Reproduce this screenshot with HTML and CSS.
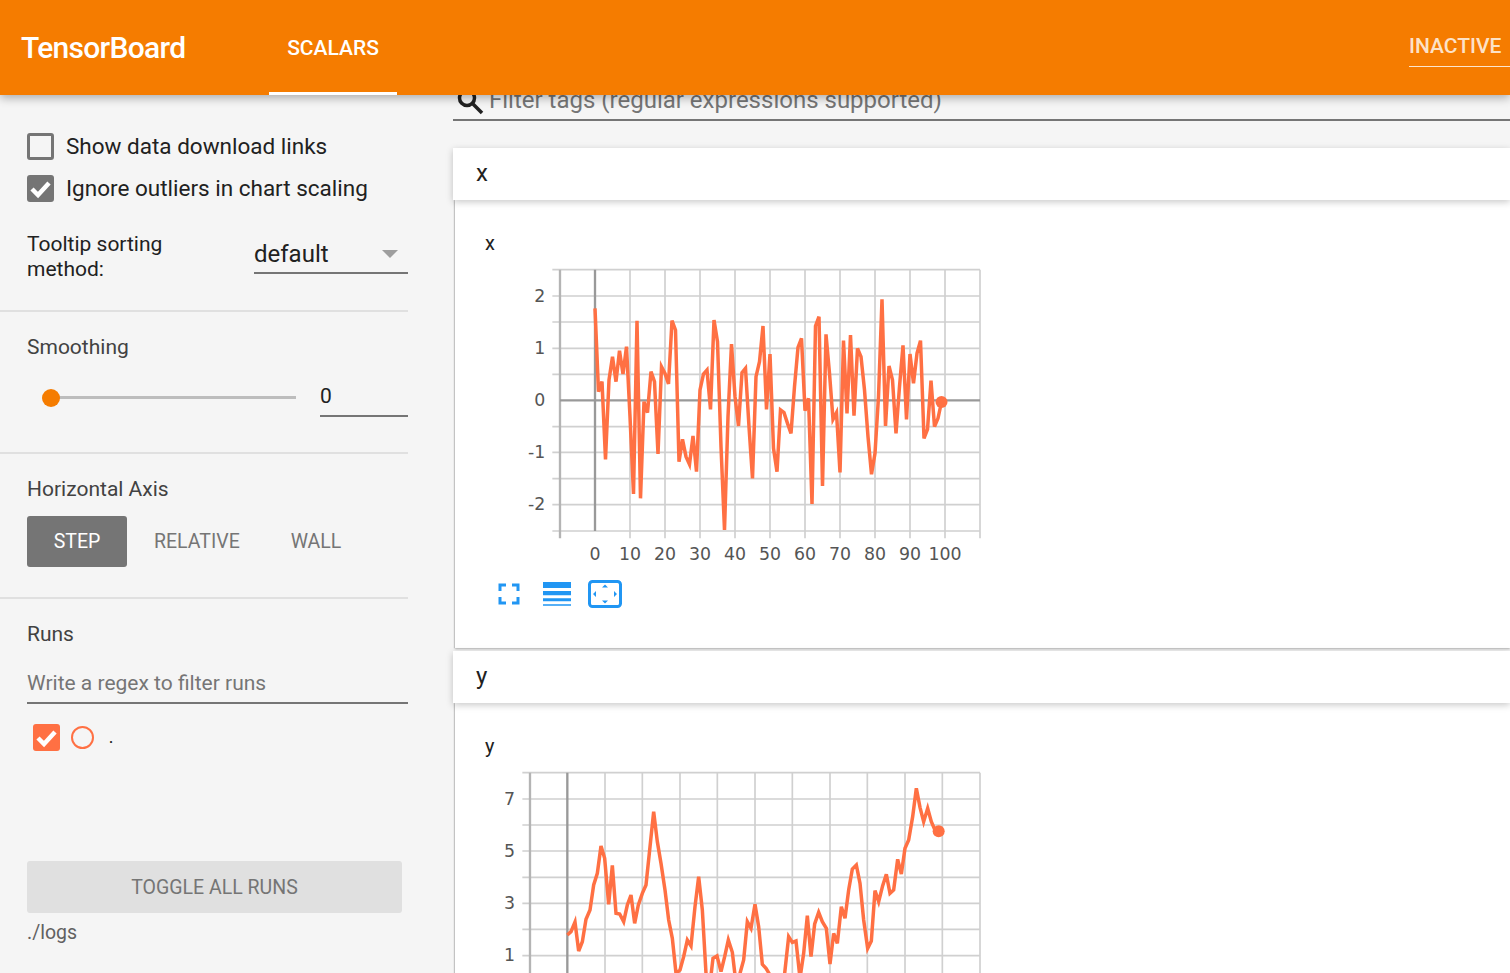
FILE: index.html
```html
<!DOCTYPE html>
<html lang="en">
<head>
<meta charset="utf-8">
<title>TensorBoard</title>
<link rel="stylesheet" href="styles.css">
</head>
<body>
<header class="topbar">
  <div class="brand">TensorBoard</div>
  <div class="tab">SCALARS</div>
  <div class="inactive">INACTIVE</div>
</header>
<div class="layout">
  <aside class="sidebar">
    <section class="sec sec-options">
      <label class="check-row"><span class="box"></span><span class="check-text">Show data download links</span></label>
      <label class="check-row"><span class="box box-on"><svg viewBox="0 0 27 27" class="tick"><path d="M5 14l6 6L22 8"/></svg></span><span class="check-text">Ignore outliers in chart scaling</span></label>
      <div class="tooltip-row">
        <div class="tooltip-label">Tooltip sorting method:</div>
        <div class="select"><span>default</span><i class="arrow"></i></div>
      </div>
    </section>
    <section class="sec sec-smooth">
      <div class="sec-title">Smoothing</div>
      <div class="slider-row">
        <div class="track"><i class="thumb"></i></div>
        <div class="num">0</div>
      </div>
    </section>
    <section class="sec sec-axis">
      <div class="sec-title">Horizontal Axis</div>
      <div class="axis-btns">
        <div class="axbtn axbtn-on">STEP</div>
        <div class="axbtn axbtn-rel">RELATIVE</div>
        <div class="axbtn axbtn-wall">WALL</div>
      </div>
    </section>
    <section class="sec-runs">
      <div class="sec-title">Runs</div>
      <div class="regex">Write a regex to filter runs</div>
      <div class="run-row">
        <span class="run-box"><svg viewBox="0 0 27 27" class="tick"><path d="M5 14l6 6L22 8"/></svg></span>
        <span class="run-dot"></span>
        <span class="run-name">.</span>
      </div>
      <div class="toggle">TOGGLE ALL RUNS</div>
      <div class="logdir">./logs</div>
    </section>
  </aside>
  <main class="main">
    <div class="filter">
      <svg class="search" viewBox="0 0 28 28"><circle cx="11" cy="9" r="7.5"/><path d="M16.5 14.5L26 24"/></svg>
      <span>Filter tags (regular expressions supported)</span>
    </div>
    <section class="cat">
      <div class="cat-head">x</div>
      <div class="cat-body body-x">
        <div class="chart-title">x</div>
        <svg class="plot" viewBox="135 96 1425 1050" width="475" height="350">
          <path class="grid" d="M247 119H1530M247 198H1530M247 276H1530M247 355H1530M247 433H1530M247 590H1530M247 667H1530M247 746H1530M247 824H1530M247 903H1530M480 119V925M585 119V925M690 119V925M795 119V925M900 119V925M1005 119V925M1110 119V925M1215 119V925M1320 119V925M1425 119V925M1530 119V925"/>
          <path class="axis-l" d="M270 119V925"/>
          <path class="axis-z" d="M270 511H1530M375 119V903"/>
          <polyline class="line" points="375,235 385.5,485 396,455 406.5,688 417,450 427.5,380 438,455 448.5,362 459,432 469.5,350 480,560 490.5,792 501,272 511.5,805 522,515 532.5,548 543,425 553.5,455 564,672 574.5,410 585,430 595.5,462 606,272 616.5,300 627,695 637.5,628 648,680 658.5,703 669,618 679.5,725 690,480 700.5,432 711,420 721.5,538 732,270 742.5,335 753,650 763.5,900 774,560 784.5,342 795,500 805.5,588 816,428 826.5,415 837,590 847.5,745 858,440 868.5,395 879,288 889.5,538 900,372 910.5,655 921,725 931.5,540 942,548 952.5,580 963,610 973.5,470 984,352 994.5,325 1005,542 1015.5,505 1026,822 1036.5,288 1047,260 1057.5,768 1068,313 1078.5,430 1089,568 1099.5,548 1110,727 1120.5,332 1131,550 1141.5,315 1152,557 1162.5,355 1173,380 1183.5,480 1194,620 1204.5,733 1215,670 1225.5,500 1236,208 1246.5,588 1257,408 1267.5,450 1278,610 1288.5,470 1299,346 1309.5,568 1320,372 1330.5,460 1341,370 1351.5,332 1362,625 1372.5,598 1383,452 1393.5,590 1404,565 1414.5,516"/>
          <circle class="dot" cx="1414.5" cy="516" r="18"/>
          <g class="ylab">
            <text x="226" y="216">2</text><text x="226" y="373">1</text><text x="226" y="529">0</text><text x="226" y="685">-1</text><text x="226" y="840">-2</text>
          </g>
          <g class="xlab">
            <text x="375" y="990">0</text><text x="480" y="990">10</text><text x="585" y="990">20</text><text x="690" y="990">30</text><text x="795" y="990">40</text><text x="900" y="990">50</text><text x="1005" y="990">60</text><text x="1110" y="990">70</text><text x="1215" y="990">80</text><text x="1320" y="990">90</text><text x="1425" y="990">100</text>
          </g>
        </svg>
        <div class="tools">
          <svg class="tool-full" viewBox="0 0 24 24" width="24" height="24"><path d="M3 9V3h6M15 3h6v6M21 15v6h-6M9 21H3v-6"/></svg>
          <svg class="tool-lines" viewBox="0 0 28 24" width="28" height="24"><path d="M0 0h28v6H0zM0 9h28v4.300H0zM0 16.300h28v3H0zM0 22.300h28v1.400H0z"/></svg>
          <svg class="tool-fit" viewBox="0 0 34 28" width="34" height="28"><rect x="1.500" y="1.500" width="31" height="25" rx="3"/><path d="M17 4.500l3 3h-6zM17 23.500l3-3h-6zM5 14l3-3v6zM29 14l-3-3v6z"/></svg>
        </div>
      </div>
    </section>
    <section class="cat cat-y">
      <div class="cat-head">y</div>
      <div class="cat-body body-y">
        <div class="chart-title">y</div>
        <svg class="plot" viewBox="60 135 1500 1050" width="500" height="350">
          <path class="grid" d="M127 158H1500M127 237H1500M127 315H1500M127 393H1500M127 472H1500M127 550H1500M127 628H1500M127 707H1500M375 158V1000M487 158V1000M600 158V1000M712 158V1000M825 158V1000M937 158V1000M1050 158V1000M1162 158V1000M1275 158V1000M1387 158V1000M1500 158V1000"/>
          <path class="axis-l" d="M150 158V1000"/>
          <path class="axis-z" d="M262 158V1000"/>
          <polyline class="line" points="262,645 273,635 285,606 296,693 307,665 318,598 330,570 341,495 352,460 363,378 374,415 386,553 397,436 408,580 419,582 431,605 442,555 453,525 464,610 475,555 487,520 498,495 509,390 521,275 532,365 543,430 555,510 566,600 577,655 588,760 600,750 611,710 622,660 633,678 645,560 656,470 667,570 678,760 689,800 699,715 711,708 723,755 734,710 745,660 757,697 768,790 780,760 791,720 802,605 813,625 825,553 836,620 847,733 858,745 870,765 881,790 892,790 903,790 914,760 926,650 937,667 948,663 960,775 971,700 982,587 993,710 1004,612 1016,577 1027,605 1039,625 1050,732 1061,640 1072,670 1084,560 1095,595 1106,510 1117,447 1129,435 1140,490 1151,600 1163,685 1174,663 1185,512 1196,545 1208,497 1219,463 1230,520 1241,510 1253,418 1264,462 1275,385 1286,360 1298,290 1309,205 1320,262 1331,305 1343,265 1354,305 1365,330 1376,334"/>
          <circle class="dot" cx="1376" cy="334" r="18"/>
          <g class="ylab">
            <text x="105" y="255">7</text><text x="105" y="411">5</text><text x="105" y="568">3</text><text x="105" y="724">1</text>
          </g>
        </svg>
      </div>
    </section>
  </main>
</div>
</body>
</html>
```
FILE: styles.css
```css
* { box-sizing: border-box; }
html, body { height: 100%; }
body {
  margin: 0;
  height: 973px;
  overflow: hidden;
  background: #f5f5f5;
  font-family: Roboto, "Liberation Sans", sans-serif;
  color: #212121;
}
.topbar {
  position: relative;
  z-index: 5;
  height: 95px;
  background: #f57c00;
  color: #fff;
  display: flex;
  align-items: center;
  padding-left: 21px;
  box-shadow: 0 3px 9px rgba(0, 0, 0, .3);
}
.brand { width: 248px; font-size: 30px; font-weight: 500; letter-spacing: -.7px; }
.tab {
  width: 128px;
  height: 95px;
  line-height: 97px;
  text-align: center;
  font-size: 21px;
  font-weight: 500;
  border-bottom: 3px solid #fff;
}
.inactive {
  margin-left: auto;
  width: 101px;
  height: 40px;
  margin-top: -2px;
  line-height: 38px;
  font-size: 21px;
  font-weight: 500;
  color: rgba(255, 255, 255, .8);
  white-space: nowrap;
  border-bottom: 1px solid rgba(255, 255, 255, .8);
}
.layout { display: flex; height: 878px; }
.sidebar { width: 453px; flex: none; }
.sec { width: 408px; padding-left: 27px; border-bottom: 2px solid #e0e0e0; }
.sec-options { height: 217px; padding-top: 38px; }
.check-row { display: flex; align-items: center; gap: 12px; height: 27px; margin-bottom: 15px; font-size: 22.500px; }
.check-text { margin-top: -2px; }
.box { width: 27px; height: 27px; border: 3px solid #757575; border-radius: 3px; flex: none; }
.box-on { background: #757575; border: 0; }
.tick { display: block; width: 27px; height: 27px; fill: none; stroke: #fff; stroke-width: 4.500; }
.tooltip-row { display: flex; margin-top: 30px; }
.tooltip-label { width: 227px; padding-right: 70px; font-size: 21px; line-height: 25px; }
.select {
  width: 154px;
  height: 45px;
  font-size: 24px;
  line-height: 43px;
  border-bottom: 2px solid #757575;
  display: flex;
  justify-content: space-between;
  align-items: center;
  padding: 7px 10px 0 0;
  margin-top: -3px;
}
.arrow { width: 0; height: 0; border-left: 8px solid transparent; border-right: 8px solid transparent; border-top: 8px solid #9e9e9e; }
.sec-title { font-size: 21px; line-height: 26px; color: #424242; }
.sec-smooth { height: 142px; padding-top: 22px; }
.slider-row { display: flex; align-items: center; height: 40px; margin-top: 17px; }
.track { position: relative; width: 245px; height: 3px; margin-left: 24px; background: #bdbdbd; }
.thumb { position: absolute; left: -9px; top: -7px; width: 18px; height: 18px; border-radius: 50%; background: #f57c00; }
.num { width: 88px; height: 40px; margin-left: 24px; font-size: 21px; line-height: 38px; border-bottom: 2px solid #757575; color: #212121; }
.sec-axis { height: 145px; padding-top: 22px; }
.axis-btns { display: flex; margin-top: 14px; font-size: 19.500px; color: #757575; }
.axbtn { height: 51px; line-height: 51px; }
.axbtn-on { width: 100px; background: #757575; color: #fff; text-align: center; border-radius: 3px; }
.axbtn-rel { margin-left: 27px; }
.axbtn-wall { margin-left: 51px; }
.sec-runs { width: 408px; padding-left: 27px; padding-top: 22px; }
.regex { margin-top: 23px; height: 34px; font-size: 21px; line-height: 26px; color: #757575; border-bottom: 2px solid #757575; }
.run-row { display: flex; align-items: center; height: 27px; margin-top: 20px; margin-left: 6px; }
.run-box { width: 27px; height: 27px; background: #ff7043; border-radius: 3px; }
.run-dot { width: 23px; height: 23px; margin-left: 11px; border: 2.500px solid #ff7043; border-radius: 50%; }
.run-name { margin-left: 15px; font-size: 15px; font-weight: 500; color: #212121; }
.toggle {
  width: 375px;
  height: 52px;
  margin-top: 110px;
  background: #e0e0e0;
  border-radius: 3px;
  text-align: center;
  line-height: 54px;
  font-size: 19.500px;
  color: #757575;
}
.logdir { margin-top: 8px; font-size: 19.500px; line-height: 24px; color: #616161; }
.main { flex: 1; min-width: 0; }
.filter {
  height: 26px;
  overflow: hidden;
  display: flex;
  align-items: flex-end;
  padding: 0 0 5px 4px;
  border-bottom: 2px solid #757575;
  font-size: 24px;
  color: #757575;
  white-space: nowrap;
}
.filter span { line-height: 28px; margin-left: 5px; flex: none; }
.search { width: 28px; height: 28px; flex: none; fill: none; stroke: #212121; stroke-width: 3.500; margin-bottom: -3px; margin-left: -1px; }
.cat { margin-top: 27px; }
.cat-y { margin-top: 3px; }
.cat-head {
  position: relative;
  height: 52px;
  line-height: 50px;
  padding-left: 23px;
  font-size: 24px;
  background: #fff;
  box-shadow: 0 2px 7px rgba(0, 0, 0, .22);
}
.cat-body { margin-left: 2px; background: #fff; box-shadow: 0 1px 2px rgba(0, 0, 0, .25), -1px 0 1px #d4d4d4; }
.body-x { height: 448px; }
.body-y { height: 300px; }
.chart-title { padding: 31px 0 0 30px; font-size: 20px; line-height: 24px; height: 62px; }
.plot { display: block; margin-left: 60px; }
.body-y .plot { margin-left: 45px; }
.grid { fill: none; stroke: #d0d0d0; stroke-width: 5; }
.axis-l { fill: none; stroke: #b4b4b4; stroke-width: 7; }
.axis-z { fill: none; stroke: #999; stroke-width: 7; }
.line { fill: none; stroke: #ff7043; stroke-width: 10.500; }
.dot { fill: #ff7043; }
.ylab text, .xlab text { font-family: "DejaVu Sans", sans-serif; font-size: 52px; fill: #555; }
.ylab text { text-anchor: end; }
.xlab text { text-anchor: middle; }
.tools { display: flex; align-items: center; margin: -33px 0 0 43px; height: 30px; }
.tool-full { fill: none; stroke: #2196f3; stroke-width: 3; margin-left: -1px; }
.tool-lines { fill: #2196f3; margin-left: 22px; }
.tool-fit { margin-left: 17px; }
.tool-fit rect { fill: none; stroke: #2196f3; stroke-width: 3; }
.tool-fit path { fill: #2196f3; }
```
